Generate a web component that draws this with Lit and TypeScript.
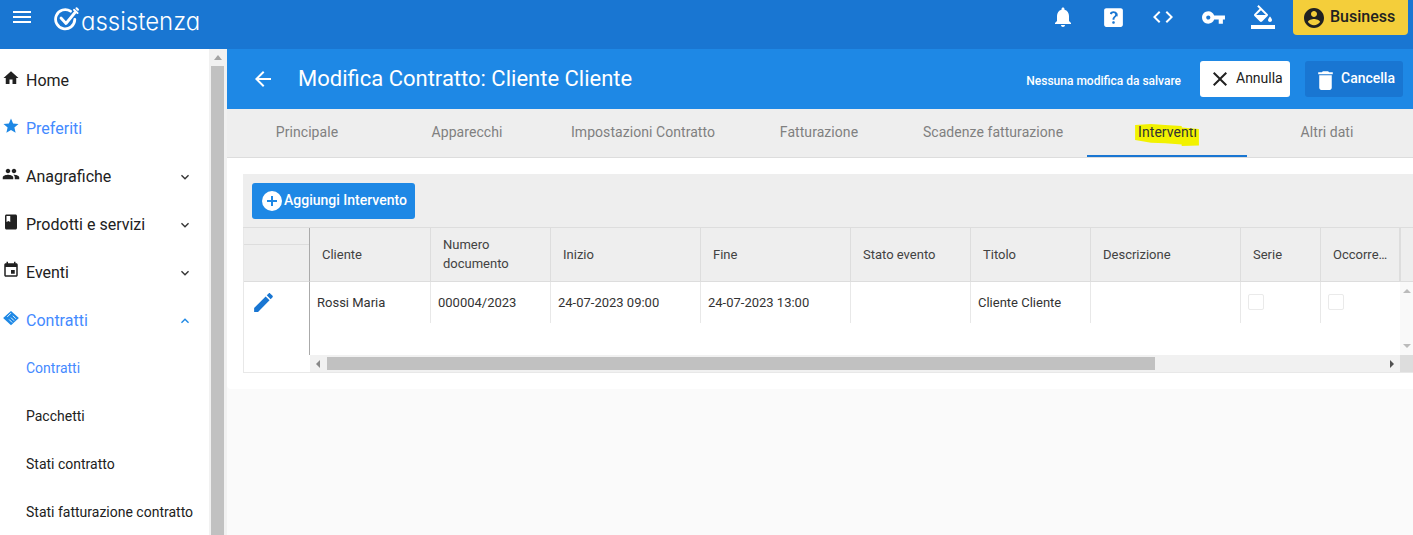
import { LitElement, html, css, svg } from "lit";
import { customElement } from "lit/decorators.js";

const P: Record<string, string> = {
  menu: "M3 18h18v-2H3v2zm0-5h18v-2H3v2zm0-7v2h18V6H3z",
  bell: "M12 22c1.1 0 2-.9 2-2h-4c0 1.1.89 2 2 2zm6-6v-5c0-3.07-1.64-5.64-4.5-6.32V4c0-.83-.67-1.5-1.5-1.5s-1.5.67-1.5 1.5v.68C7.63 5.36 6 7.92 6 11v5l-2 2v1h16v-1l-2-2z",
  help: "M19 3H5c-1.1 0-2 .9-2 2v14c0 1.1.9 2 2 2h14c1.1 0 2-.9 2-2V5c0-1.1-.9-2-2-2zm-6.99 15c-.7 0-1.26-.56-1.26-1.26 0-.71.56-1.25 1.26-1.25.71 0 1.25.54 1.25 1.25-.01.69-.54 1.26-1.25 1.26zm3.01-7.4c-.76 1.11-1.48 1.46-1.87 2.17-.16.29-.22.48-.22 1.41h-1.82c0-.49-.08-1.29.31-1.98.49-.87 1.42-1.39 1.96-2.16.57-.81.25-2.33-1.37-2.33-1.06 0-1.58.8-1.8 1.47l-1.65-.7C8.56 7.15 9.9 6 11.99 6c1.75 0 2.94.8 3.54 1.77.51.83.81 2.38.03 3.53z",
  code: "M9.4 16.6L4.8 12l4.6-4.6L8 6l-6 6 6 6 1.4-1.4zm5.2 0l4.6-4.6-4.6-4.6L16 6l6 6-6 6-1.4-1.4z",
  key: "M12.65 10C11.83 7.67 9.61 6 7 6c-3.31 0-6 2.69-6 6s2.69 6 6 6c2.61 0 4.83-1.67 5.65-4H17v4h4v-4h2v-4H12.65zM7 14c-1.1 0-2-.9-2-2s.9-2 2-2 2 .9 2 2-.9 2-2 2z",
  fill: "M16.56 8.94L7.62 0 6.21 1.41l2.38 2.38-5.15 5.15c-.59.59-.59 1.54 0 2.12l5.5 5.5c.29.29.68.44 1.06.44s.77-.15 1.06-.44l5.5-5.5c.59-.58.59-1.53 0-2.12zM5.21 10L10 5.21 14.79 10H5.21zM19 11.5s-2 2.17-2 3.5c0 1.1.9 2 2 2s2-.9 2-2c0-1.33-2-3.5-2-3.5zM0 20h24v4H0z",
  account: "M12 2C6.48 2 2 6.48 2 12s4.48 10 10 10 10-4.48 10-10S17.52 2 12 2zm0 3c1.66 0 3 1.34 3 3s-1.34 3-3 3-3-1.34-3-3 1.34-3 3-3zm0 14.2c-2.5 0-4.71-1.28-6-3.22.03-1.99 4-3.08 6-3.08 1.99 0 5.97 1.09 6 3.08-1.29 1.94-3.5 3.22-6 3.22z",
  back: "M20 11H7.83l5.59-5.59L12 4l-8 8 8 8 1.41-1.41L7.83 13H20v-2z",
  close: "M19 6.41L17.59 5 12 10.59 6.41 5 5 6.41 10.59 12 5 17.59 6.41 19 12 13.41 17.59 19 19 17.59 13.41 12z",
  trash: "M6 19c0 1.1.9 2 2 2h8c1.1 0 2-.9 2-2V7H6v12zM19 4h-3.5l-1-1h-5l-1 1H5v2h14V4z",
  home: "M10 20v-6h4v6h5v-8h3L12 3 2 12h3v8z",
  star: "M12 17.27L18.18 21l-1.64-7.03L22 9.24l-7.19-.61L12 2 9.19 8.63 2 9.24l5.46 4.73L5.82 21z",
  people: "M16 11c1.66 0 2.99-1.34 2.99-3S17.66 5 16 5c-1.66 0-3 1.34-3 3s1.34 3 3 3zm-8 0c1.66 0 2.99-1.34 2.99-3S9.66 5 8 5C6.34 5 5 6.34 5 8s1.34 3 3 3zm0 2c-2.33 0-7 1.17-7 3.5V19h14v-2.5c0-2.33-4.67-3.5-7-3.5zm8 0c-.29 0-.62.02-.97.05 1.16.84 1.97 1.97 1.97 3.45V19h6v-2.5c0-2.33-4.67-3.5-7-3.5z",
  book: "M18 2H6c-1.1 0-2 .9-2 2v16c0 1.1.9 2 2 2h12c1.1 0 2-.9 2-2V4c0-1.1-.9-2-2-2zM6 4h5v8l-2.5-1.5L6 12V4z",
  event: "M17 12h-5v5h5v-5zM16 1v2H8V1H6v2H5c-1.11 0-1.99.9-1.99 2L3 19c0 1.1.89 2 2 2h14c1.1 0 2-.9 2-2V5c0-1.1-.9-2-2-2h-1V1h-2zm3 18H5V8h14v11z",
  contract: "M12 2.5L22.5 12 12 21.5 1.5 12z",
  down: "M16.59 8.59L12 13.17 7.41 8.59 6 10l6 6 6-6z",
  up: "M12 8l-6 6 1.41 1.41L12 10.83l4.59 4.58L18 14z",
  edit: "M3 17.25V21h3.75L17.81 9.94l-3.75-3.75L3 17.25zM20.71 7.04c.39-.39.39-1.02 0-1.41l-2.34-2.34c-.39-.39-1.02-.39-1.41 0l-1.83 1.83 3.75 3.75 1.83-1.83z",
  plus: "M13 7h-2v4H7v2h4v4h2v-4h4v-2h-4V7z",
};

const icon = (name: string, size: number) =>
  html`<svg class="ic" width=${size} height=${size} viewBox="0 0 24 24" fill="currentColor">${svg`<path d=${P[name]}></path>`}${
    name === "contract"
      ? svg`<path d="M7 10.5l5-5M9.5 14l4 4M12 11.5l4 4M14.5 9l4 4" fill="none" stroke="#fff" stroke-width="1.2"></path>`
      : ""
  }</svg>`;

const NAV = [
  { t: "Home", i: "home" },
  { t: "Preferiti", i: "star", blue: true },
  { t: "Anagrafiche", i: "people", c: "down" },
  { t: "Prodotti e servizi", i: "book", c: "down" },
  { t: "Eventi", i: "event", c: "down" },
  { t: "Contratti", i: "contract", c: "up", blue: true },
  { t: "Contratti", sub: true, blue: true },
  { t: "Pacchetti", sub: true },
  { t: "Stati contratto", sub: true },
  { t: "Stati fatturazione contratto", sub: true },
];

const TABS = [
  ["Principale", 160], ["Apparecchi", 160], ["Impostazioni Contratto", 192], ["Fatturazione", 160],
  ["Scadenze fatturazione", 188], ["Interventi", 160], ["Altri dati", 160],
] as [string, number][];

const COLS = [
  ["Cliente", 121], ["Numero documento", 120], ["Inizio", 150], ["Fine", 150], ["Stato evento", 120],
  ["Titolo", 120], ["Descrizione", 150], ["Serie", 80], ["Occorre…", 80],
] as [string, number][];

const ROW = ["Rossi Maria", "000004/2023", "24-07-2023 09:00", "24-07-2023 13:00", "", "Cliente Cliente", "", "check", "check"];

@customElement("app-root")
export class AppRoot extends LitElement {
  static styles = css`
    :host { display: flex; flex-direction: column; width: 1413px; height: 535px; overflow: hidden; font-family: Roboto, "Liberation Sans", sans-serif; color: #212121; background: #fafafa; }
    .ic { display: block; flex: none; }
    .top { height: 49px; flex: none; background: #1976d2; color: #fff; display: flex; align-items: flex-start; }
    .burger { margin: 5px 0 0 10px; }
    .logo { margin: 6px 0 0 20px; }
    .brand { font-family: Inter, Lato, sans-serif; font-feature-settings: "cv11" 1; font-weight: 300; font-size: 24px; line-height: 30px; letter-spacing: 0; margin: 7px 0 0 1px; }
    .tools { margin-left: auto; display: flex; align-items: flex-start; }
    .tool { display: flex; justify-content: center; width: 50px; margin-top: 5px; }
    .biz { margin: 0 5px 0 5px; width: 115px; height: 35px; box-sizing: border-box; background: #f4ce3a; border-radius: 0 0 4px 4px; display: flex; align-items: center; gap: 4px; padding-left: 9px; font-weight: 500; font-size: 16px; color: #212121; }
    .biz span { position: relative; top: -1px; }
    .body { flex: 1; display: flex; min-height: 0; }
    .side { width: 209px; flex: none; background: #fff; padding-top: 7px; overflow: hidden; }
    .item { height: 48px; display: flex; align-items: center; font-size: 16px; padding-right: 16px; color: #212121; }
    .item > .ic { margin: 0 6px 0 2px; position: relative; top: -2px; }
    .item .lab { flex: 1; white-space: nowrap; }
    .chev { position: relative; top: 1px; color: #333; }
    .item.blue { color: #448aff; }
    .item.blue > .ic, .item.blue .chev { color: #1e88e5; }
    .item.sub { font-size: 14px; padding-left: 26px; padding-right: 0; }
    .vbar { width: 18px; flex: none; background: #f1f1f1; display: flex; flex-direction: column; align-items: center; box-sizing: border-box; padding: 0 3px 0 2px; }
    .up { width: 0; height: 0; border: 4px solid transparent; border-top: 0; border-bottom: 5px solid #a3a3a3; margin: 6px 0 6px; }
    .thumb { align-self: stretch; flex: 1; background: #c1c1c1; }
    .main { flex: 1; min-width: 0; display: flex; flex-direction: column; }
    .head { height: 60px; flex: none; background: #1e88e5; color: #fff; display: flex; align-items: center; }
    .back { margin: 0 0 1px 24px; }
    .title { font-size: 22px; font-weight: 400; margin-left: 23px; flex: 1; position: relative; top: -1px; }
    .note { font-size: 12px; font-weight: 500; margin-right: 19px; position: relative; top: 2px; }
    .btn { height: 36px; box-sizing: border-box; border-radius: 3px; display: flex; align-items: center; font-size: 14px; font-weight: 500; }
    .cancel { width: 90px; background: #fff; color: #212121; font-weight: 400; padding-left: 8px; gap: 4px; margin-right: 15px; }
    .del { width: 98px; background: #1976d2; padding-left: 8px; gap: 3px; margin-right: 10px; }
    .del .ic { position: relative; top: 1px; }
    .del span, .cancel span { position: relative; top: -1px; }
    .tabs { height: 49px; flex: none; box-sizing: border-box; background: #eee; border-bottom: 1px solid #ddd; display: flex; }
    .tab { height: 48px; box-sizing: border-box; display: flex; justify-content: center; align-items: flex-start; padding-top: 15px; font-size: 14px; color: #808080; flex: none; letter-spacing: .06px; }
    .tab.on { color: #333; border-bottom: 2px solid #1976d2; }
    mark { display: block; background: #f2f200; color: #333; padding: 1px 2px 6px 3px; margin-top: -1px; clip-path: polygon(0 9%, 25% 4%, 47% 9%, 73% 13%, 73% 20%, 100% 26%, 100% 98%, 73% 100%, 73% 93%, 47% 88%, 25% 86%, 0 74%); }
    .content { height: 231px; flex: none; box-sizing: border-box; background: #fff; padding: 16px 0 0 16px; border-radius: 0 0 0 4px; }
    .tool-row { height: 54px; box-sizing: border-box; background: #eee; padding: 9px 0 0 9px; border-bottom: 1px solid #ddd; }
    .add { width: 163px; background: #1e88e5; color: #fff; padding-left: 10px; gap: 2px; }
    .add > span:last-child { position: relative; top: -1px; }
    .add-c { width: 20px; height: 20px; background: #fff; color: #1e88e5; border-radius: 50%; display: flex; align-items: center; justify-content: center; flex: none; }
    .add-c .ic { flex: none; }
    .grid { display: flex; height: 145px; border: solid #e8e8e8; border-width: 0 0 1px 1px; box-sizing: border-box; }
    .frozen { width: 65px; flex: none; display: flex; flex-direction: column; }
    .fh { height: 54px; flex: none; background: #eee; border-bottom: 1px solid #ddd; box-sizing: border-box; }
    .fh div { height: 16px; border-bottom: 1px solid #ddd; }
    .fb { padding: 8px 0 0 7px; color: #1976d2; }
    .scroll { flex: 1; min-width: 0; display: flex; flex-direction: column; }
    .hrow, .brow, .gapzone { border-left: 1px solid #aaa; }
    .hrow, .brow { display: flex; flex: none; }
    .hrow { height: 54px; background: #eee; border-bottom: 1px solid #ddd; box-sizing: border-box; }
    .hc { flex: none; box-sizing: border-box; border-right: 1px solid #ddd; display: flex; align-items: center; padding: 0 12px 1px; font-size: 13px; line-height: 19px; color: #424242; }
    .hc:last-child { border-right-width: 2px; }
    .brow { height: 41px; }
    .bc { flex: none; box-sizing: border-box; border-right: 1px solid #e8e8e8; padding: 13px 0 0 7px; font-size: 13px; color: #333; white-space: nowrap; line-height: 16px; }
    .box { width: 16px; height: 16px; box-sizing: border-box; border: 1px solid #eaeaea; border-radius: 2px; margin-top: -1px; }
    .gapzone { flex: 1; display: flex; min-height: 0; }
    .bm { flex: 1; }
    .vb { width: 13px; flex: none; background: #f9f9f9; display: flex; flex-direction: column; align-items: center; justify-content: space-between; padding: 7px 0 7px; box-sizing: border-box; margin-top: -41px; height: 73px; }
    .tri-u { width: 0; height: 0; border: 4px solid transparent; border-top: 0; border-bottom: 4px solid #bbb; }
    .tri-d { width: 0; height: 0; border: 4px solid transparent; border-bottom: 0; border-top: 4px solid #bbb; }
    .hb { height: 17px; flex: none; background: #f1f1f1; display: flex; align-items: center; margin-left: 1px; }
    .tri-l { width: 0; height: 0; border: 4px solid transparent; border-left: 0; border-right: 4px solid #888; margin: 0 7px 0 6px; }
    .tri-r { width: 0; height: 0; border: 4px solid transparent; border-right: 0; border-left: 4px solid #505050; margin-left: auto; margin-right: 19px; }
    .hthumb { width: 828px; height: 13px; background: #c1c1c1; }
    .corner { width: 13px; height: 17px; background: #ddd; flex: none; margin-left: -13px; }
    .rest { flex: 1; background: #fafafa; }
  `;

  render() {
    return html`
      <div class="top">
        <span class="burger">${icon("menu", 24)}</span>
        <svg class="logo" width="26" height="26" viewBox="0 0 26 26" fill="none" stroke="#fff" stroke-width="2.8" stroke-linecap="round" stroke-linejoin="round">
          <path d="M16.5 5.2A9.6 9.6 0 1 0 20.8 13.5"></path>
          <path d="M7 12l5 5.5L21 6.5"></path>
          <path d="M20 3.8L23.5 7M22.5 2.2l1.5 1.5" stroke-width="2"></path>
        </svg>
        <span class="brand">assistenza</span>
        <div class="tools">
          <span class="tool">${icon("bell", 24)}</span>
          <span class="tool">${icon("help", 25)}</span>
          <span class="tool">${icon("code", 24)}</span>
          <span class="tool">${icon("key", 25)}</span>
          <span class="tool">${icon("fill", 24)}</span>
          <div class="biz">${icon("account", 24)}<span>Business</span></div>
        </div>
      </div>
      <div class="body">
        <nav class="side">
          ${NAV.map((n) => html`
            <div class="item ${n.blue ? "blue" : ""} ${n.sub ? "sub" : ""}">
              ${n.i ? icon(n.i, 18) : ""}
              <span class="lab">${n.t}</span>
              ${n.c ? html`<span class="chev">${icon(n.c, 16)}</span>` : ""}
            </div>`)}
        </nav>
        <div class="vbar"><i class="up"></i><div class="thumb"></div></div>
        <main class="main">
          <header class="head">
            <span class="back">${icon("back", 24)}</span>
            <span class="title">Modifica Contratto: Cliente Cliente</span>
            <span class="note">Nessuna modifica da salvare</span>
            <div class="btn cancel">${icon("close", 24)}<span>Annulla</span></div>
            <div class="btn del">${icon("trash", 25)}<span>Cancella</span></div>
          </header>
          <div class="tabs">
            ${TABS.map(([t, w]) => html`<div class="tab ${t === "Interventi" ? "on" : ""}" style="width:${w}px">${t === "Interventi" ? html`<mark>${t}</mark>` : t}</div>`)}
          </div>
          <section class="content">
            <div class="tool-row">
              <div class="btn add"><span class="add-c">${icon("plus", 24)}</span><span>Aggiungi Intervento</span></div>
            </div>
            <div class="grid">
              <div class="frozen">
                <div class="fh"><div></div></div>
                <div class="fb">${icon("edit", 25)}</div>
              </div>
              <div class="scroll">
                <div class="hrow">
                  ${COLS.map(([t, w]) => html`<div class="hc" style="width:${w}px"><span>${t}</span></div>`)}
                </div>
                <div class="brow">
                  ${ROW.map((v, i) => html`<div class="bc" style="width:${COLS[i][1]}px">${v === "check" ? html`<div class="box"></div>` : v}</div>`)}
                </div>
                <div class="gapzone"><div class="bm"></div><div class="vb"><i class="tri-u"></i><i class="tri-d"></i></div></div>
                <div class="hb"><i class="tri-l"></i><div class="hthumb"></div><i class="tri-r"></i><div class="corner"></div></div>
              </div>
            </div>
          </section>
          <div class="rest"></div>
        </main>
      </div>
    `;
  }
}
